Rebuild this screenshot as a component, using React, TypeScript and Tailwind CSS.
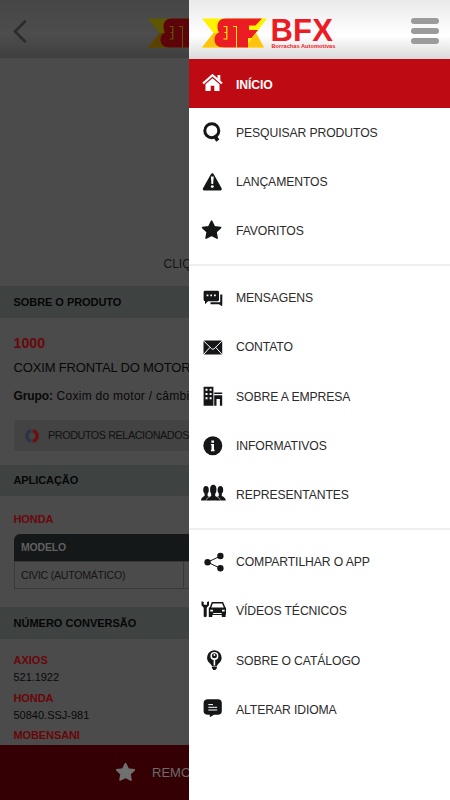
import type { ReactNode } from "react";

const INK = "#141617";

type LogoProps = { red: string; yellow: string; amber: string; className?: string };

function Emblem({ red, yellow, amber, className }: LogoProps) {
  return (
    <svg width="65" height="30" viewBox="0 0 65 30" className={className}>
      <path d="M0 .5H65L54 15L62 29.500H0L11.500 15Z" fill={yellow} />
      <path d="M11.500 15L0 29.500H20V15Z" fill={amber} />
      <path d="M54 15L62 29.500H43.500Z" fill={amber} />
      <path
        d="M23.500 .5H60L53.500 7.500H47V12H56L49.500 20H46V29.500H22C16 29.500 12.500 26.500 12.500 21.500C12.500 18 14.500 15.500 17 14.500C16 13 15.500 11 15.500 8.500C15.500 3.500 18.500 .5 23.500 .5Z"
        fill={red}
      />
      <path d="M21.500 8.500H24.800V21H21.500M22.500 14.500H24.800" stroke={yellow} strokeWidth="1.200" fill="none" />
      <path d="M34.500 8V29.500M31 8.500H34.500" stroke={yellow} strokeWidth="1" fill="none" />
    </svg>
  );
}

function Band({ children, className }: { children: ReactNode; className: string }) {
  return (
    <div className={`flex shrink-0 items-center bg-[#3e4241] pl-[13.5px] text-[11px] font-bold text-[#060606] ${className}`}>
      {children}
    </div>
  );
}

function Product() {
  return (
    <div className="relative flex h-full w-[189px] shrink-0 flex-col overflow-hidden whitespace-nowrap bg-[#4b4b4b] text-[#080808]">
      <div className="flex h-[58px] shrink-0 bg-linear-to-b from-[#464646] via-[#4d4d4d] via-60% to-[#3f3f3f] pl-[13px] pt-[18px]">
        <svg width="14" height="26" viewBox="0 0 14 26" className="mt-[1px] shrink-0">
          <path d="M12 2.500L2 12.500L12 22.500" fill="none" stroke="#2c2c2c" strokeWidth="2.700" strokeLinecap="round" />
        </svg>
        <Emblem red="#5c0409" yellow="#5e5700" amber="#5b4100" className="ml-[120.5px] shrink-0" />
      </div>
      <div className="flex h-[228px] shrink-0 items-end pb-[15.500px] pl-[163.5px] text-[12px] leading-[14px]">
        <span className="mb-[-0.5px] text-[#141414]">CLIQUE PARA AMPLIAR</span>
      </div>
      <Band className="h-[32px]"><span className="tracking-[-0.05px]">SOBRE O PRODUTO</span></Band>
      <div className="flex h-[147px] shrink-0 flex-col pl-[13.5px]">
        <div className="mt-[17px] text-[14.2px] font-bold leading-[17px] text-[#6a070b]">1000</div>
        <div className="mt-[8px] text-[13px] leading-[15px] tracking-[-0.15px]">COXIM FRONTAL DO MOTOR</div>
        <div className="mt-[14px] text-[12px] leading-[15px] tracking-[0.28px]"><b className="tracking-[-0.1px]">Grupo:</b> Coxim do motor / câmbio</div>
        <div className="mt-[16px] flex h-[31px] w-[260px] items-center rounded-[4px] bg-[#434343] pl-[10px] text-[11px] text-[#111]">
          <svg width="16" height="16" viewBox="0 0 16 16" className="mr-[8.500px] shrink-0">
            <path d="M7.200 2.800A5.300 5.300 0 0 0 7.200 13.200" fill="none" stroke="#293348" strokeWidth="3.200" />
            <path d="M8.800 2.800A5.300 5.300 0 0 1 8.800 13.200" fill="none" stroke="#730a0e" strokeWidth="3.200" />
            <path d="M1 3L3 4.600M0 8H1.500M2 13L3.500 11.500M14 3L12.500 4.500M16 8H14.500M14 13L12.500 11.500" stroke="#434343" strokeWidth="1" />
          </svg>
          <span className="text-[10.8px] tracking-[-0.42px]">PRODUTOS RELACIONADOS</span>
        </div>
      </div>
      <Band className="h-[31px]"><span className="tracking-[-0.08px]">APLICAÇÃO</span></Band>
      <div className="flex h-[111px] shrink-0 flex-col pl-[13.5px]">
        <div className="mt-[16px] text-[11px] font-bold leading-[14px] tracking-[-0.1px] text-[#6a070b]">HONDA</div>
        <div className="mt-[8px] flex h-[27px] w-[260px] items-center rounded-t-[6px] bg-[#151818] pl-[7.5px] text-[10.5px] font-bold tracking-[-0.2px] text-[#606060]">MODELO</div>
        <div className="flex h-[28px] w-[260px] border border-[#393939] text-[10.6px] leading-[26px] tracking-[-0.25px] text-[#141414]">
          <div className="w-[169px] border-r border-[#393939] pl-[6.5px]">CIVIC (AUTOMÁTICO)</div>
        </div>
      </div>
      <Band className="h-[32px]"><span>NÚMERO CONVERSÃO</span></Band>
      <div className="flex h-[106px] shrink-0 flex-col pl-[13.5px] pt-[14px] text-[11px] leading-[14px]">
        <b className="text-[#6a0508]">AXIOS</b>
        <span className="mt-[3px] leading-[14px] tracking-[-0.05px]">521.1922</span>
        <b className="mt-[6.500px] tracking-[-0.1px] text-[#6a0508]">HONDA</b>
        <span className="mt-[3px]">50840.SSJ-981</span>
        <b className="mt-[6.500px] tracking-[-0.1px] text-[#6a0508]">MOBENSANI</b>
      </div>
      <div className="flex flex-1 items-center bg-[#340003] pl-[115px] text-[13px] text-[#6b6b6b]">
        <svg width="21" height="20" viewBox="0 0 24 24" className="mb-[2px] mr-[16px] shrink-0" preserveAspectRatio="none">
          <path d="M12 2L15 8.500L22 9.500L17 14.500L18.200 21.500L12 18.200L5.800 21.500L7 14.500L2 9.500L9 8.500Z" fill="#707070" stroke="#707070" strokeWidth="2" strokeLinejoin="round" />
        </svg>
        REMOVER
      </div>
    </div>
  );
}

function Icon({ children }: { children: ReactNode }) {
  return (
    <svg width="26" height="24" viewBox="0 0 26 24" fill={INK} className="mr-[10.500px] shrink-0">
      {children}
    </svg>
  );
}

const icons: Record<string, ReactNode> = {
  home: (
    <g fill="#fff">
      <path d="M3 12.500L12.500 4.200L22 12.500" fill="none" stroke="#fff" strokeWidth="2.200" />
      <path d="M17.500 4H20.300V10L17.500 7.500Z" />
      <path d="M5.500 13.200L12.500 7.200L19.500 13.200V20H14.300V14.800H10.700V20H5.500Z" />
    </g>
  ),
  search: (
    <g fill="none" stroke={INK}>
      <circle cx="11.800" cy="10.700" r="7" strokeWidth="3" />
      <path d="M14.300 15.500L17.800 20.600" strokeWidth="3.800" />
    </g>
  ),
  alert: (
    <g>
      <path d="M12.300 5.800L20.300 20H4.300Z" stroke={INK} strokeWidth="3" strokeLinejoin="round" />
      <path d="M10.900 7.600H13.700L13.200 15H11.400Z" fill="#fff" />
      <circle cx="12.300" cy="17.600" r="1.450" fill="#fff" />
    </g>
  ),
  star: (
    <path d="M11.600 2.200L14.300 7.700L20.600 8.600L16 12.900L17.100 19.100L11.600 16.200L6.100 19.100L7.200 12.900L2.600 8.600L8.900 7.700Z" stroke={INK} strokeWidth="1.600" strokeLinejoin="round" />
  ),
  messages: (
    <g>
      <path d="M20.200 8.500H22.300V18.200L22 20.200L19 18.200H10.500V16.300H20.200Z" />
      <path d="M5 4.800H17.600Q19 4.800 19 6.200V13.800Q19 15.200 17.600 15.200H8L5 18.200V15.200Q3.600 15.200 3.600 13.800V6.200Q3.600 4.800 5 4.800Z" />
      <path d="M6.600 8.500H8.400V10.300H6.600ZM10.300 8.500H12.100V10.300H10.300ZM14 8.500H15.800V10.300H14Z" fill="#fff" />
    </g>
  ),
  mail: (
    <g>
      <rect x="3.500" y="5.600" width="18.700" height="13.800" rx="1.200" />
      <path d="M3.800 6.100L11.700 13.800Q12.850 14.800 14 13.800L21.900 6.100M4 19L10 12.300M21.700 19L15.700 12.300" fill="none" stroke="#fff" strokeWidth="1" />
    </g>
  ),
  company: (
    <g>
      <path d="M3.600 2.800H13.400V21.700H3.600ZM14.200 8.600H22.200V10H14.200ZM14.200 11.300H22.200V21.700H19.900V15H16.500V21.700H14.200Z" />
      <path d="M5.500 4.800H7.500V6.800H5.500ZM9.600 4.800H11.600V6.800H9.600ZM5.500 9H7.500V11H5.500ZM9.600 9H11.600V11H9.600ZM5.500 13.300H7.500V15.300H5.500ZM9.600 13.300H11.600V15.300H9.600Z" fill="#fff" />
    </g>
  ),
  info: (
    <g>
      <circle cx="12.800" cy="12.800" r="9.500" />
      <path d="M11.400 7.500H14V9.700H11.400ZM10.900 10.900H14V16.800H14.600V18.200H10.900V16.800H11.500V12.200H10.900Z" fill="#fff" />
    </g>
  ),
  people: (
    <g transform="translate(0 -.6)">
      <ellipse cx="6" cy="7.500" rx="2.800" ry="3.800" />
      <path d="M4.600 9H7.600V13.500L10 15V18H1Q1 15 4.600 13.500Z" />
      <ellipse cx="20.400" cy="7.500" rx="2.800" ry="3.800" />
      <path d="M18.800 9H21.800V13.500Q25.600 15 25.800 18H16.500V15L18.800 13.500Z" />
      <path d="M11.100 10V13.500Q6.300 15 6 18.400H20.500Q20 15 15.400 13.500V10Z" stroke="#fff" strokeWidth=".5" />
      <ellipse cx="13.250" cy="7" rx="3.200" ry="4.700" />
      <rect x="11.500" y="9.500" width="3.500" height="5" />
    </g>
  ),
  share: (
    <g>
      <path d="M20.600 6L7.500 12.200L20.600 18.400" fill="none" stroke={INK} strokeWidth="1" />
      <circle cx="7.600" cy="12.200" r="3.200" />
      <circle cx="20.400" cy="6" r="3.200" />
      <circle cx="20.400" cy="18.300" r="3.200" />
    </g>
  ),
  car: (
    <g>
      <path d="M1.500 2.300V6.300L3.700 8.800V17.300Q5.200 19 6.700 17.300V8.800L9 6.300V2.300L7 3V5.800H3.700V3Z" />
      <path d="M10.300 9L12.300 3.800H22.600L24.800 9" fill="none" stroke={INK} strokeWidth="1.500" />
      <path d="M8.800 8.600H26V15.600H25.600V18H21.800V16H12.300V18H8.800Z" />
      <path d="M10.300 10.800H13V12.600H10.300ZM22 10.800H24.700V12.600H22ZM13.200 14H21.600V15H13.200Z" fill="#fff" />
    </g>
  ),
  bulb: (
    <g>
      <path d="M14.300 2.200A7.500 7.500 0 0 1 18.400 15.800L16.700 18H12.100L10.300 15.800A7.500 7.500 0 0 1 14.300 2.200Z" />
      <path d="M11.900 18.600H16.900V20L15.400 22H13.400L11.900 20Z" />
      <circle cx="14.400" cy="8" r="4" fill="#fff" />
      <path d="M13.600 11H15.200V17.500H13.600Z" fill="#fff" />
      <circle cx="14.400" cy="7.800" r="2.500" />
      <circle cx="14.400" cy="7" r=".9" fill="#fff" />
    </g>
  ),
  chat: (
    <g>
      <path d="M8 2.200H17.800Q21.800 2.200 21.800 6.200V14Q21.800 17.800 17.800 17.800H14L9.800 20.300V17.800H8Q3.600 17.800 3.600 14V6.200Q3.600 2.200 8 2.200Z" />
      <path d="M8.300 7.600H13M8.300 10.300H17.200M8.300 13H17.200" stroke="#fff" strokeWidth="1" />
    </g>
  ),
};

const groups: { icon: string; label: string; active?: boolean }[][] = [
  [
    { icon: "home", label: "INÍCIO", active: true },
    { icon: "search", label: "PESQUISAR PRODUTOS" },
    { icon: "alert", label: "LANÇAMENTOS" },
    { icon: "star", label: "FAVORITOS" },
  ],
  [
    { icon: "messages", label: "MENSAGENS" },
    { icon: "mail", label: "CONTATO" },
    { icon: "company", label: "SOBRE A EMPRESA" },
    { icon: "info", label: "INFORMATIVOS" },
    { icon: "people", label: "REPRESENTANTES" },
  ],
  [
    { icon: "share", label: "COMPARTILHAR O APP" },
    { icon: "car", label: "VÍDEOS TÉCNICOS" },
    { icon: "bulb", label: "SOBRE O CATÁLOGO" },
    { icon: "chat", label: "ALTERAR IDIOMA" },
  ],
];

export default function App() {
  return (
    <div className="flex h-[800px] w-[450px] overflow-hidden font-['Liberation_Sans',Arial,sans-serif]">
      <Product />
      <aside className="flex flex-1 flex-col bg-white">
        <header className="flex h-[58.5px] shrink-0 bg-linear-to-b from-[#e9e9e9] via-white via-60% to-[#dadada] pl-[13px] pr-[11px] pt-[18px]">
          <Emblem red="#ec1c24" yellow="#fff200" amber="#ffc20e" className="shrink-0" />
          <div className="ml-[3.500px] flex flex-col text-[#ec1c24]">
            <span className="text-[31px] font-bold leading-[25px] tracking-[0.2px]">BFX</span>
            <span className="ml-[1px] whitespace-nowrap text-[5.700px] font-bold leading-[6.500px]">Borrachas Automotivas</span>
          </div>
          <div className="ml-auto flex flex-col gap-[4.500px]">
            <i className="h-[5.500px] w-[28px] rounded-full bg-[#9b9b9b]" />
            <i className="h-[5.500px] w-[28px] rounded-full bg-[#9b9b9b]" />
            <i className="h-[5.500px] w-[28px] rounded-full bg-[#9b9b9b]" />
          </div>
        </header>
        {groups.map((group, index) => (
          <nav key={index} className={index ? "mt-[9px] border-t-2 border-[#efefef] pt-[7px]" : ""}>
            {group.map((item) => (
              <div
                key={item.label}
                className={`flex h-[49.2px] items-center pl-[10.500px] text-[12.2px] tracking-[-0.1px] ${item.active ? "bg-[#be0a12] font-bold text-white" : "text-[#2b2b2b]"}`}
              >
                <Icon>{icons[item.icon]}</Icon>
                <span className={item.active ? "pt-[4px]" : "pt-[1px]"}>{item.label}</span>
              </div>
            ))}
          </nav>
        ))}
      </aside>
    </div>
  );
}
